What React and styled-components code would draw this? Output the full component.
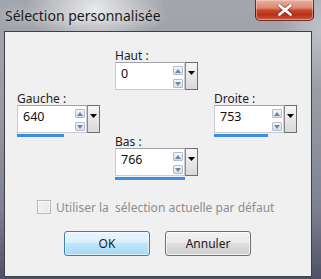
import React from "react";
import styled, { createGlobalStyle } from "styled-components";

const Global = createGlobalStyle`
  html, body { margin: 0; padding: 0; overflow: hidden; background: #8c8e98; }
  * { box-sizing: border-box; }
`;

const UI_FONT = `"Noto Sans", "Open Sans", Arial, sans-serif`;

const Window = styled.div`
  width: 321px;
  height: 279px;
  display: flex;
  flex-direction: column;
  padding: 0 9px 2px 4px;
  background:
    radial-gradient(ellipse 70px 40px at 95px 8px, rgba(255,255,255,0.75), rgba(255,255,255,0) 100%),
    radial-gradient(ellipse 40px 60px at 318px 30px, rgba(210,212,220,0.6), rgba(255,255,255,0) 100%),
    linear-gradient(to bottom, #a3a6ac 0%, #979aa2 40%, #7e8090 75%, #4f5064 100%);
  font-family: ${UI_FONT};
`;

const TitleBar = styled.div`
  height: 31px;
  display: flex;
  align-items: flex-start;
  justify-content: space-between;
`;

const Title = styled.div`
  margin: 7px 0 0 1px;
  font-size: 14px;
  line-height: 18px;
  color: #1b1b1b;
  text-shadow: 0 0 8px rgba(255,255,255,0.8);
`;

const CloseButton = styled.div`
  width: 59px;
  height: 22px;
  margin-top: -1px;
  margin-right: -2px;
  border: 1px solid rgba(70, 20, 10, 0.8);
  border-radius: 0 0 5px 5px;
  background: linear-gradient(to bottom, #eab0a3 0%, #dd8671 40%, #c7452a 52%, #b53219 75%, #d25a3e 100%);
  box-shadow: inset 0 0 0 1px rgba(255, 220, 210, 0.45);
  display: flex;
  align-items: center;
  justify-content: center;
`;

const Client = styled.div`
  flex: 1;
  background: #f0f0f0;
  border: 1px solid #3d4048;
  display: flex;
  flex-direction: column;
  padding: 17px 0 0 12px;
`;

const FieldGrid = styled.div`
  display: grid;
  grid-template-columns: 98px 99px 83px;
  grid-template-rows: 43px 43px auto;
`;

const Field = styled.div`
  grid-column: ${(p) => p.$col};
  grid-row: ${(p) => p.$row};
  display: flex;
  flex-direction: column;
  align-self: start;
  width: 83px;
`;

const Label = styled.div`
  font-size: 12px;
  line-height: 13px;
  height: 13px;
  color: #1e1e1e;
  white-space: nowrap;
`;

const InputRow = styled.div`
  display: flex;
  height: 28px;
`;

const TextBox = styled.div`
  width: 70px;
  height: 28px;
  background: #ffffff;
  border: 1px solid #c9ccd3;
  border-top-color: #9ea2ab;
  display: flex;
  justify-content: space-between;
  padding: 0 1px 0 5px;
`;

const Value = styled.span`
  font-size: 12.5px;
  line-height: 14px;
  margin-top: 4px;
  color: #111;
`;

const Spin = styled.div`
  display: flex;
  flex-direction: column;
  justify-content: space-between;
  padding: 3px 0 1px;
`;

const SpinButton = styled.div`
  width: 10px;
  height: 9px;
  border: 1px solid #b4bccb;
  border-radius: 1px;
  background: linear-gradient(to bottom, #f3f6fa, #d6dfea);
  display: flex;
  align-items: center;
  justify-content: center;
`;

const DropButton = styled.div`
  width: 13px;
  height: 28px;
  border: 1px solid #6e6e6e;
  border-left-color: #8a8a8a;
  background: linear-gradient(to bottom, #f6f6f6, #d9d9d9);
  display: flex;
  justify-content: center;
  padding-top: 8px;
`;

const Bar = styled.div`
  height: 3px;
  margin-top: 1px;
  background: #3c8ee3;
`;

const CheckRow = styled.div`
  display: flex;
  align-items: center;
  margin: 19px 0 0 20px;
  height: 16px;
`;

const CheckBox = styled.div`
  width: 14px;
  height: 14px;
  border: 1px solid #b9b9b9;
  background: linear-gradient(135deg, #f4f4f4, #e6e6e6);
  box-shadow: inset 0 0 0 1px #f8f8f8;
  margin-right: 5px;
`;

const CheckLabel = styled.span`
  font-size: 12px;
  color: #8e8e8e;
  white-space: pre;
`;

const ButtonRow = styled.div`
  display: flex;
  gap: 15px;
  margin: 16px 0 0 47px;
`;

const Button = styled.div`
  width: 86px;
  height: 25px;
  border-radius: 3px;
  border: 1px solid ${(p) => (p.$primary ? "#3c7fb1" : "#707070")};
  background: ${(p) =>
    p.$primary
      ? "linear-gradient(to bottom, #eaf6fd 0%, #d9f0fc 45%, #bee6fd 50%, #a7d9f5 100%)"
      : "linear-gradient(to bottom, #f2f2f2 0%, #ebebeb 45%, #dddddd 50%, #cfcfcf 100%)"};
  box-shadow: inset 0 0 0 1px ${(p) => (p.$primary ? "rgba(255,255,255,0.6)" : "rgba(255,255,255,0.7)")};
  display: flex;
  align-items: center;
  justify-content: center;
  font-size: 12px;
  color: #1a1a1a;
`;

const UpTri = () => (
  <svg width="6" height="4" viewBox="0 0 6 4"><path d="M0 4 L3 0 L6 4 Z" fill="#6f84a8" /></svg>
);
const DownTri = () => (
  <svg width="6" height="4" viewBox="0 0 6 4"><path d="M0 0 L6 0 L3 4 Z" fill="#6f84a8" /></svg>
);
const DropTri = () => (
  <svg width="7" height="4" viewBox="0 0 7 4"><path d="M0 0 L7 0 L3.5 4 Z" fill="#000" /></svg>
);

const fields = [
  { label: "Haut :", value: "0", pct: 0, col: 2, row: 1 },
  { label: "Gauche :", value: "640", pct: 67, col: 1, row: 2 },
  { label: "Droite :", value: "753", pct: 77, col: 3, row: 2 },
  { label: "Bas :", value: "766", pct: 100, col: 2, row: 3 },
];

export default function App() {
  return (
    <>
      <Global />
      <Window>
        <TitleBar>
          <Title>Sélection personnalisée</Title>
          <CloseButton>
            <svg width="16" height="12" viewBox="0 0 16 12">
              <path d="M2.5 1.5 L13.5 10.5 M13.5 1.5 L2.5 10.5" stroke="#5a2418" strokeWidth="4.2" strokeLinecap="round" opacity="0.55" />
              <path d="M2.5 1.5 L13.5 10.5 M13.5 1.5 L2.5 10.5" stroke="#ffffff" strokeWidth="2.8" strokeLinecap="round" />
            </svg>
          </CloseButton>
        </TitleBar>
        <Client>
          <FieldGrid>
            {fields.map((f) => (
              <Field key={f.label} $col={f.col} $row={f.row}>
                <Label>{f.label}</Label>
                <InputRow>
                  <TextBox>
                    <Value>{f.value}</Value>
                    <Spin>
                      <SpinButton><UpTri /></SpinButton>
                      <SpinButton><DownTri /></SpinButton>
                    </Spin>
                  </TextBox>
                  <DropButton><DropTri /></DropButton>
                </InputRow>
                <Bar style={{ width: `${(70 * f.pct) / 100}px` }} />
              </Field>
            ))}
          </FieldGrid>
          <CheckRow>
            <CheckBox />
            <CheckLabel>Utiliser la  sélection actuelle par défaut</CheckLabel>
          </CheckRow>
          <ButtonRow>
            <Button $primary>OK</Button>
            <Button>Annuler</Button>
          </ButtonRow>
        </Client>
      </Window>
    </>
  );
}
